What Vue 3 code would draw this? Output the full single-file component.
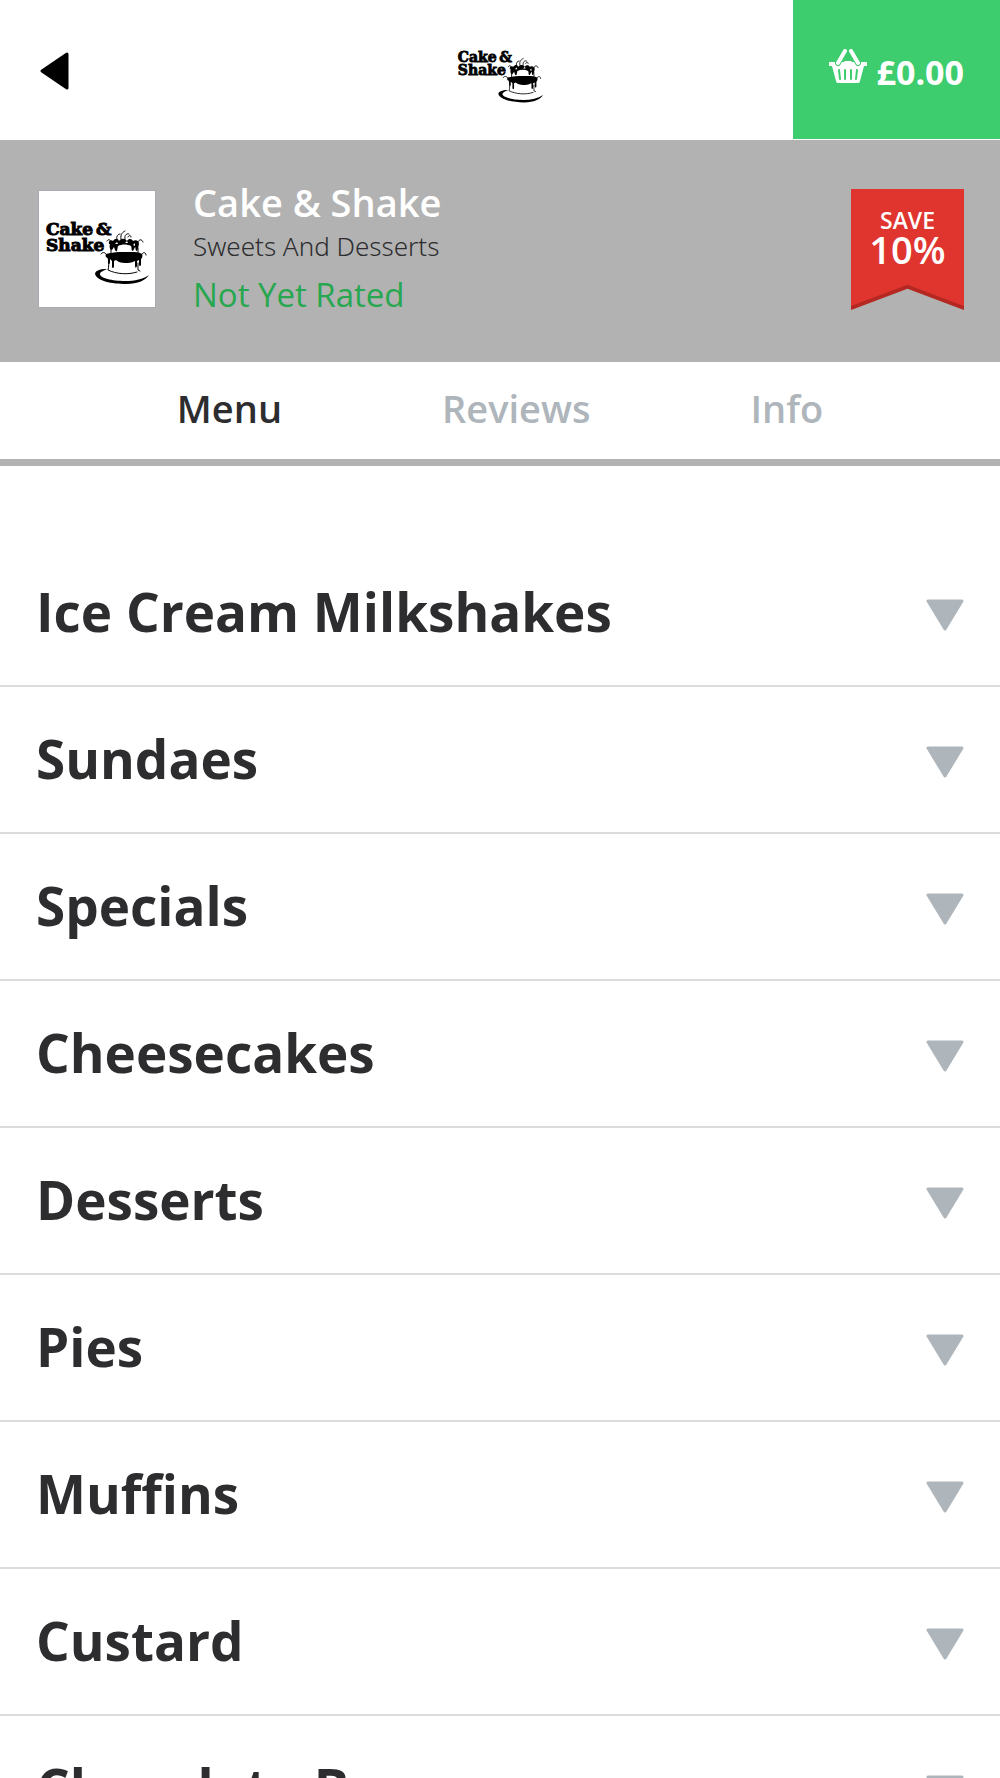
<script setup>
    import { ref } from 'vue';

    const tabs = ['Menu', 'Reviews', 'Info'];
    const activeTab = ref('Menu');

    const categories = [
        'Ice Cream Milkshakes',
        'Sundaes',
        'Specials',
        'Cheesecakes',
        'Desserts',
        'Pies',
        'Muffins',
        'Custard',
        'Chocolate Bars'
    ];
</script>

<template>
    <div class="page">
        <header class="topbar">
            <button class="back" type="button" aria-label="Back">
                <svg width="29" height="38" viewBox="0 0 29 38">
                    <path d="M2 19 27 2v34z" fill="#000" stroke="#000" stroke-width="3" stroke-linejoin="round" />
                </svg>
            </button>
            <svg class="brand" viewBox="0 14 116 82" role="img" aria-label="Cake &amp; Shake">
                <use href="#logo" />
            </svg>
            <button class="basket" type="button">
                <svg width="38" height="34" viewBox="0 0 38 34" fill="none" aria-hidden="true">
                    <path d="M1 13h36a1 1 0 0 1 0 4h-2l-4 15q0 2-2 2H9q-2 0-2-2L3 17H1a1 1 0 0 1 0-4z" fill="#fff" />
                    <path d="M10 21l1 9M16 21v9M22 21v9M28 21l-1 9" stroke="#3dcd6e" stroke-width="2" stroke-linecap="round" />
                    <path d="M9 14 16 2M29 14 22 2" stroke="#3dcd6e" stroke-width="6" stroke-linecap="round" />
                    <path d="M12 19 14 14l2-2h6l2 2 2 5z" fill="#fff" />
                    <path d="M9 14 16 2M29 14 22 2" stroke="#fff" stroke-width="4" stroke-linecap="round" />
                </svg>
                <span>£0.00</span>
            </button>
        </header>

        <section class="banner">
            <svg class="thumb" viewBox="0 0 116 116" role="img" aria-label="Cake &amp; Shake">
                <g id="logo">
                    <g class="wordmark">
                        <text x="7" y="44">Cake</text>
                        <text x="57" y="44">&amp;</text>
                        <text x="7" y="60">Shake</text>
                    </g>
                    <!-- cherry stems and cake outline -->
                    <g fill="none" stroke="#000" stroke-width="1" stroke-linecap="round">
                        <path d="M72 51c-1-3-3-3-4-1M78 49c-1-4 1-6 3-6M82 48c-1-5 2-7 4-8M86 48c-1-4 2-6 4-5M89 46c1-2 3-2 3 0M99 51c1-3 4-3 5 0M103 63c1-2 4-2 4 1M67 63c-1-2-4-2-5 0" />
                        <path d="M69 66c1 6 1 9 0 13 8 4 20 5 29 2M99 72v7l2 1M72 57v5M99 57v5" />
                    </g>
                    <!-- upper tier icing -->
                    <path d="M70 53c-1-3 2-5 4-3 2-3 5-3 6 0 2-3 6-3 8 0 2-3 5-2 6 0 3-2 6 0 6 3l-1 4-1 3c-2 0-1-3-2-4l-2 4c-2 0-1-3-2-5-4-2-9-2-13 0l-1 5c-2 1-2-2-3-4l-2 3c-2 0-3-3-2-6z" />
                    <!-- lower tier icing -->
                    <path d="M67 63c4-1 9-2 13-2h12c4 0 8 0 11 2 1 2 0 4-1 5v6c-1 2-2 1-2-1v-4l-2 1v5c-1 3-2 2-2-1v-4c-4 2-7 2-10 2-4 0-7-1-9-3l-2 1v6c-1 2-2 1-2-1v-5l-2-2v4c-1 2-2 1-2-1v-4c-2 0-3-2-2-4z" />
                    <path d="M76 53l2-2 1 2zM86 52l2-2 1 2zM94 54l2-2v3zM81 61c1-2 7-2 9 0z" fill="#fff" />
                    <path d="M68 78c-8 0-12 2-12 5 2 7 17 10 31 10 12 0 20-4 23-9-6 4-14 6-24 6-13 0-25-3-25-7 0-2 3-3 7-5z" />
                </g>
            </svg>
            <div class="about">
                <h1>Cake &amp; Shake</h1>
                <p class="cuisine">Sweets And Desserts</p>
                <p class="rating">Not Yet Rated</p>
            </div>
            <div class="ribbon">
                <svg class="ribbon-shape" viewBox="0 0 112 120" aria-hidden="true">
                    <path d="M0 0h112v120L56 99 0 120z" fill="#b52822" />
                    <path d="M0 0h112v116L56 95 0 116z" fill="#e0342f" />
                </svg>
                <span class="save">SAVE</span>
                <span class="amount">10%</span>
            </div>
        </section>

        <nav class="tabs">
            <button
                v-for="tab in tabs"
                :key="tab"
                type="button"
                :class="{ active: tab === activeTab }"
                @click="activeTab = tab"
            >{{ tab }}</button>
        </nav>

        <ul class="categories">
            <li v-for="category in categories" :key="category">
                <button type="button">
                    <span>{{ category }}</span>
                    <svg width="38" height="32" viewBox="0 0 38 32" aria-hidden="true">
                        <path d="M2 2h34L19 30z" fill="#aeb5bb" stroke="#aeb5bb" stroke-width="3" stroke-linejoin="round" />
                    </svg>
                </button>
            </li>
        </ul>
    </div>
</template>

<style>
    body {
        margin: 0;
        background: #fff;
    }
</style>

<style scoped>
    .page {
        font-family: "Open Sans", "Noto Sans", sans-serif;
        color: #2d2d2f;
    }

    button {
        padding: 0;
        border: 0;
        background: none;
        font: inherit;
        color: inherit;
        cursor: pointer;
    }

    svg {
        display: block;
        flex-shrink: 0;
    }

    .wordmark {
        font-family: "DejaVu Serif", serif;
        font-size: 17px;
        font-weight: 700;
        stroke: #000;
        stroke-width: 1;
    }

    .topbar {
        display: grid;
        grid-template-columns: 1fr auto 1fr;
        height: 139px;
        align-items: center;
        border-bottom: 1px solid #fff;
    }

    .back {
        justify-self: start;
        padding: 22px 40px 20px;
    }

    .brand {
        width: 96px;
        padding-top: 2px;
    }

    .basket {
        display: flex;
        justify-self: end;
        align-items: center;
        gap: 10px;
        height: 100%;
        padding: 4px 36px 0;
        background: #3dcd6e;
        color: #fff;
        font-size: 34px;
        font-weight: 700;
    }

    .basket svg {
        margin-bottom: 12px;
    }

    .banner {
        display: flex;
        align-items: center;
        height: 218px;
        padding: 0 36px 4px 38px;
        background: #b2b2b2;
    }

    .thumb {
        width: 116px;
        border: 1px solid #a9abb2;
        background: #fff;
    }

    .about {
        flex: 1;
        margin: 4px 0 0 37px;
    }

    .about h1,
    .about p {
        margin: 0;
    }

    .about h1 {
        color: #fff;
        font-size: 38px;
        font-weight: 600;
        line-height: 46px;
    }

    .about .cuisine {
        font-family: "Noto Sans", sans-serif;
        font-size: 26px;
        font-weight: 300;
        line-height: 42px;
    }

    .about .rating {
        color: #27a74f;
        font-size: 33px;
        line-height: 56px;
    }

    .ribbon {
        position: relative;
        display: flex;
        flex-direction: column;
        align-items: center;
        box-sizing: border-box;
        width: 113px;
        height: 121px;
        padding-top: 16px;
        color: #fff;
        font-weight: 600;
    }

    .ribbon-shape {
        position: absolute;
        inset: 0;
    }

    .ribbon span {
        position: relative;
    }

    .save {
        font-size: 23px;
        line-height: 30px;
    }

    .amount {
        font-size: 38px;
        line-height: 28px;
    }

    .tabs {
        display: flex;
        justify-content: center;
        gap: 16vw;
        height: 97px;
        border-bottom: 7px solid #b2b2b2;
        color: #aeb5bb;
        font-size: 38px;
        font-weight: 600;
    }

    .tabs button {
        padding-bottom: 6px;
    }

    .tabs .active {
        color: #2d2d2f;
    }

    .categories {
        margin: 74px 0 0;
        padding: 0;
        list-style: none;
    }

    .categories li {
        border-bottom: 2px solid #dcdcdd;
    }

    .categories button {
        display: flex;
        align-items: center;
        justify-content: space-between;
        width: 100%;
        height: 145px;
        padding: 0 36px;
        font-size: 53px;
        font-weight: 700;
    }

    .categories span {
        padding-bottom: 2px;
    }

    .categories svg {
        margin-top: 4px;
    }
</style>
